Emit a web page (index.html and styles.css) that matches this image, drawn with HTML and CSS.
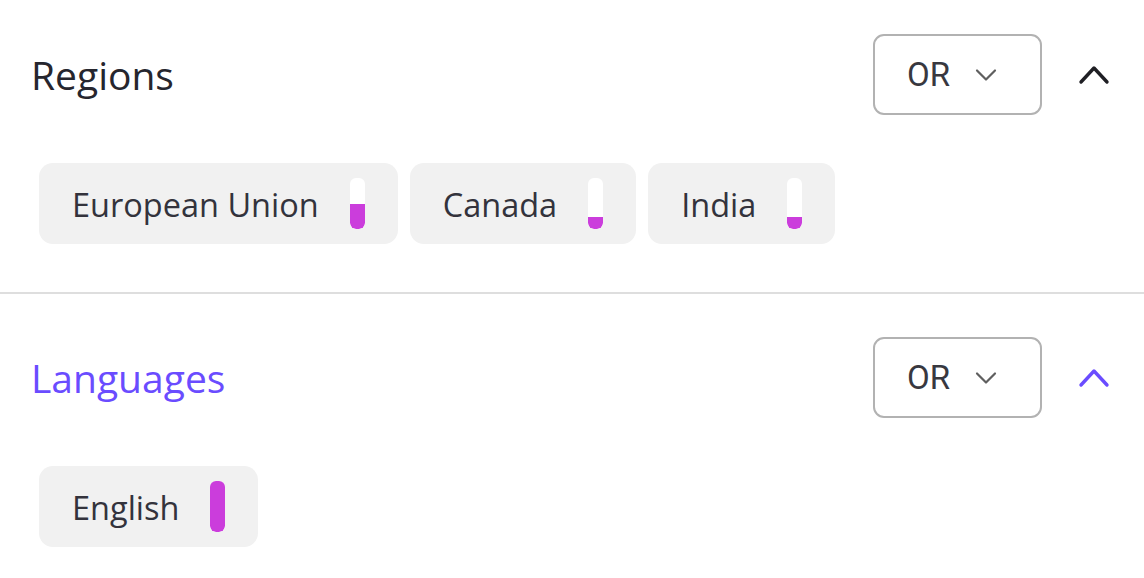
FILE: index.html
```html
<!DOCTYPE html>
<html>
<head>
<meta charset="utf-8">
<link rel="stylesheet" href="styles.css">
</head>
<body>
<div class="panel">
  <section class="section first">
    <div class="header">
      <h2 class="title">Regions</h2>
      <div class="controls">
        <button class="select">
          <span class="select-label">OR</span>
          <svg class="down" width="22" height="14" viewBox="0 0 22 14"><path d="M2 2.5 L11 11.5 L20 2.5" fill="none" stroke="#5f5f5f" stroke-width="2.2" stroke-linecap="round" stroke-linejoin="round"/></svg>
        </button>
        <svg class="up" width="32" height="20" viewBox="0 0 32 20"><path d="M3 17 L16 3 L29 17" fill="none" stroke="#1f1f24" stroke-width="3.4" stroke-linecap="round" stroke-linejoin="round"/></svg>
      </div>
    </div>
    <div class="chips">
      <div class="chip"><span class="chip-label">European Union</span><span class="bar"><span class="fill" style="height:25px"></span></span></div>
      <div class="chip"><span class="chip-label">Canada</span><span class="bar"><span class="fill" style="height:12px"></span></span></div>
      <div class="chip"><span class="chip-label">India</span><span class="bar"><span class="fill" style="height:12px"></span></span></div>
    </div>
  </section>
  <div class="divider"></div>
  <section class="section second">
    <div class="header">
      <h2 class="title active">Languages</h2>
      <div class="controls">
        <button class="select">
          <span class="select-label">OR</span>
          <svg class="down" width="22" height="14" viewBox="0 0 22 14"><path d="M2 2.5 L11 11.5 L20 2.5" fill="none" stroke="#5f5f5f" stroke-width="2.2" stroke-linecap="round" stroke-linejoin="round"/></svg>
        </button>
        <svg class="up" width="32" height="20" viewBox="0 0 32 20"><path d="M3 17 L16 3 L29 17" fill="none" stroke="#6a4cff" stroke-width="3.4" stroke-linecap="round" stroke-linejoin="round"/></svg>
      </div>
    </div>
    <div class="chips">
      <div class="chip"><span class="chip-label">English</span><span class="bar"><span class="fill" style="height:51px"></span></span></div>
    </div>
  </section>
</div>
</body>
</html>
```
FILE: styles.css
```css
* { box-sizing: border-box; }
html, body {
  margin: 0;
  padding: 0;
  background: #ffffff;
}
body {
  font-family: "Open Sans", "Noto Sans", sans-serif;
  width: 1144px;
  height: 578px;
  overflow: hidden;
}
.panel {
  display: flex;
  flex-direction: column;
}
.section.first { padding-top: 34px; padding-bottom: 48px; }
.section.second { padding-top: 43px; }
.header {
  display: flex;
  align-items: center;
  justify-content: space-between;
  height: 81px;
  padding-left: 31px;
  padding-right: 34px;
}
.title {
  margin: 0;
  font-size: 39px;
  font-weight: 400;
  color: #26262e;
  line-height: 1;
}
.title.active { color: #6a4cff; }
.controls {
  display: flex;
  align-items: center;
  gap: 36px;
}
.select {
  width: 169px;
  height: 81px;
  border: 2px solid #b2b2b2;
  border-radius: 11px;
  background: #fff;
  display: flex;
  align-items: center;
  padding: 0 0 0 32px;
  margin: 0;
  font-family: Roboto, "Open Sans", sans-serif;
  cursor: pointer;
}
.select-label {
  font-size: 33px;
  color: #38383f;
  line-height: 1;
}
.down {
  margin-left: 25px;
  display: block;
}
.up { display: block; }
.chips {
  display: flex;
  gap: 12px;
  padding-left: 39px;
  margin-top: 48px;
}
.chip {
  height: 81px;
  background: #f1f1f1;
  border-radius: 14px;
  display: flex;
  align-items: center;
  padding: 0 33px;
  gap: 31px;
}
.chip-label {
  font-size: 32.5px;
  color: #33333c;
  line-height: 1;
  padding-top: 4px;
}
.bar {
  width: 15px;
  height: 51px;
  background: #ffffff;
  border-radius: 6px;
  display: flex;
  flex-direction: column;
  justify-content: flex-end;
  overflow: hidden;
}
.fill {
  display: block;
  width: 100%;
  background: #cb3ddc;
  border-radius: 0 0 6px 6px;
}
.divider {
  height: 2px;
  background: #dedede;
}
```
